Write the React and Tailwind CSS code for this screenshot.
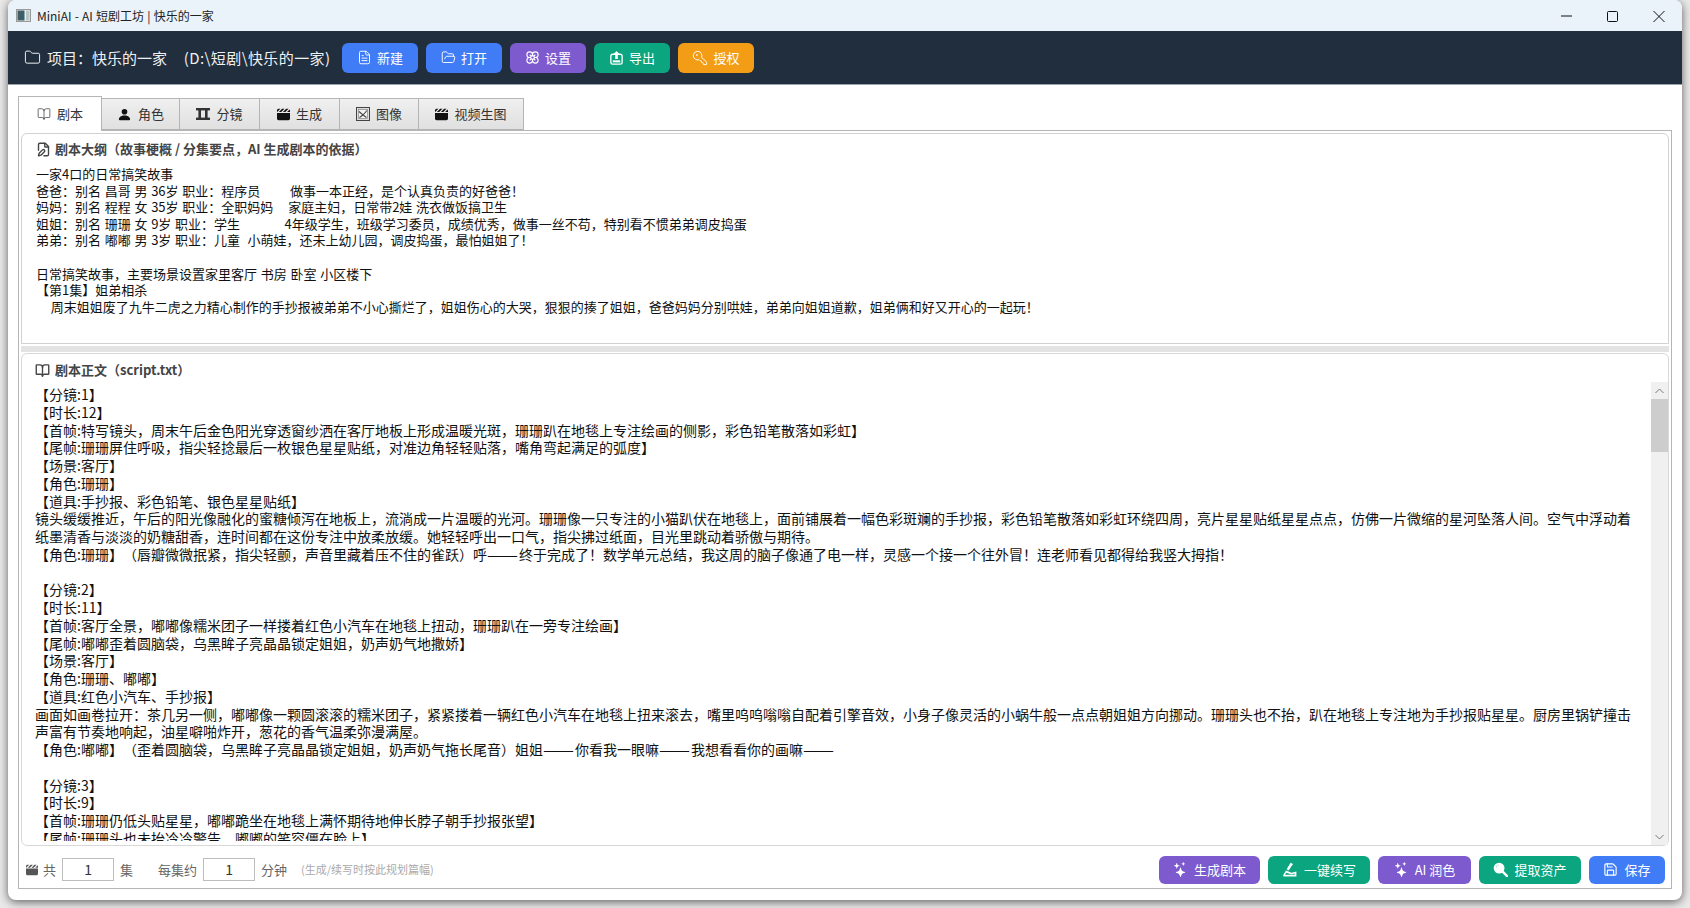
import React from 'react'
import { BookOpen, FileText, FolderOpen, Flower, KeyRound, Folder, Save, FilePen } from 'lucide-react'
import { BsStars, BsPersonFill } from 'react-icons/bs'
import { FaClapperboard } from 'react-icons/fa6'

const font = { fontFamily: '"Noto Sans CJK SC", "Liberation Sans", sans-serif' }

const outline = [
  '一家4口的日常搞笑故事',
  '爸爸：别名 昌哥 男 36岁 职业：程序员        做事一本正经，是个认真负责的好爸爸！',
  '妈妈：别名 程程 女 35岁 职业：全职妈妈    家庭主妇，日常带2娃 洗衣做饭搞卫生',
  '姐姐：别名 珊珊 女 9岁 职业：学生            4年级学生，班级学习委员，成绩优秀，做事一丝不苟，特别看不惯弟弟调皮捣蛋',
  '弟弟：别名 嘟嘟 男 3岁 职业：儿童  小萌娃，还未上幼儿园，调皮捣蛋，最怕姐姐了！',
  '',
  '日常搞笑故事，主要场景设置家里客厅 书房 卧室 小区楼下',
  '【第1集】姐弟相杀',
  '    周末姐姐废了九牛二虎之力精心制作的手抄报被弟弟不小心撕烂了，姐姐伤心的大哭，狠狠的揍了姐姐，爸爸妈妈分别哄娃，弟弟向姐姐道歉，姐弟俩和好又开心的一起玩！',
]

const script = [
  '【分镜:1】',
  '【时长:12】',
  '【首帧:特写镜头，周末午后金色阳光穿透窗纱洒在客厅地板上形成温暖光斑，珊珊趴在地毯上专注绘画的侧影，彩色铅笔散落如彩虹】',
  '【尾帧:珊珊屏住呼吸，指尖轻捻最后一枚银色星星贴纸，对准边角轻轻贴落，嘴角弯起满足的弧度】',
  '【场景:客厅】',
  '【角色:珊珊】',
  '【道具:手抄报、彩色铅笔、银色星星贴纸】',
  '镜头缓缓推近，午后的阳光像融化的蜜糖倾泻在地板上，流淌成一片温暖的光河。珊珊像一只专注的小猫趴伏在地毯上，面前铺展着一幅色彩斑斓的手抄报，彩色铅笔散落如彩虹环绕四周，亮片星星贴纸星星点点，仿佛一片微缩的星河坠落人间。空气中浮动着',
  '纸墨清香与淡淡的奶糖甜香，连时间都在这份专注中放柔放缓。她轻轻呼出一口气，指尖拂过纸面，目光里跳动着骄傲与期待。',
  '【角色:珊珊】（唇瓣微微抿紧，指尖轻颤，声音里藏着压不住的雀跃）呼——终于完成了！数学单元总结，我这周的脑子像通了电一样，灵感一个接一个往外冒！连老师看见都得给我竖大拇指！',
  '',
  '【分镜:2】',
  '【时长:11】',
  '【首帧:客厅全景，嘟嘟像糯米团子一样搂着红色小汽车在地毯上扭动，珊珊趴在一旁专注绘画】',
  '【尾帧:嘟嘟歪着圆脑袋，乌黑眸子亮晶晶锁定姐姐，奶声奶气地撒娇】',
  '【场景:客厅】',
  '【角色:珊珊、嘟嘟】',
  '【道具:红色小汽车、手抄报】',
  '画面如画卷拉开：茶几另一侧，嘟嘟像一颗圆滚滚的糯米团子，紧紧搂着一辆红色小汽车在地毯上扭来滚去，嘴里呜呜嗡嗡自配着引擎音效，小身子像灵活的小蜗牛般一点点朝姐姐方向挪动。珊珊头也不抬，趴在地毯上专注地为手抄报贴星星。厨房里锅铲撞击',
  '声富有节奏地响起，油星噼啪炸开，葱花的香气温柔弥漫满屋。',
  '【角色:嘟嘟】（歪着圆脑袋，乌黑眸子亮晶晶锁定姐姐，奶声奶气拖长尾音）姐姐——你看我一眼嘛——我想看看你的画嘛——',
  '',
  '【分镜:3】',
  '【时长:9】',
  '【首帧:珊珊仍低头贴星星，嘟嘟跪坐在地毯上满怀期待地伸长脖子朝手抄报张望】',
  '【尾帧:珊珊头也未抬冷冷警告，嘟嘟的笑容僵在脸上】',
]

function ExportIcon() {
  return (
    <svg width="15" height="15" viewBox="0 0 16 16" fill="none">
      <rect x="2" y="4.5" width="12" height="10.5" rx="2" stroke="currentColor" strokeWidth="1.4" />
      <path d="M8 1 4.8 4.6H6.6V9.5H9.4V4.6H11.2Z" fill="currentColor" />
      <rect x="4" y="11" width="8" height="2.2" fill="currentColor" />
    </svg>
  )
}

function FilmIcon() {
  return (
    <svg width="14" height="12" viewBox="0 0 14 12" fill="#333">
      <rect x="0" y="0" width="14" height="2.4" />
      <rect x="0" y="9.6" width="14" height="2.4" />
      <rect x="2.4" y="2" width="2.6" height="8" />
      <rect x="9" y="2" width="2.6" height="8" />
    </svg>
  )
}

function PictureIcon() {
  return (
    <svg width="14" height="14" viewBox="0 0 14 14" fill="none">
      <rect x="0.5" y="0.5" width="13" height="13" fill="#ddd" stroke="#444" />
      <rect x="2.5" y="2.5" width="9" height="9" fill="#f4f4f4" stroke="#777" strokeWidth="0.6" />
      <path d="M3 4.5 7 8 11 3.5M3.5 10.5 7 8l3.5 2.5" stroke="#444" strokeWidth="1.1" />
    </svg>
  )
}

function WriteIcon() {
  return (
    <svg width="16" height="16" viewBox="0 0 16 16" fill="currentColor">
      <path d="M8.6 0.8 11 2 6.6 8.4 4.6 7.2Z" />
      <path d="M4 8.4 9.6 10.8 14.4 9.6V14.6H2.6C1.2 14.6.8 13.4 1.5 12.4ZM4.4 10.8 3 12.8H12.6V11.6L9.6 12.4Z" fillRule="evenodd" />
    </svg>
  )
}

function SearchIcon() {
  return (
    <svg width="15" height="15" viewBox="0 0 16 16">
      <circle cx="6.5" cy="6.5" r="5.8" fill="currentColor" />
      <path d="M10.8 10.8 15 15" stroke="currentColor" strokeWidth="2.6" strokeLinecap="round" />
      <path d="M3.4 6.2a3 3 0 0 1 3-3" stroke="#b9e8da" strokeWidth="1.2" fill="none" />
    </svg>
  )
}

const headerBtns = [
  { label: '新建', icon: <FileText size={15} strokeWidth={1.5} />, color: 'bg-[#3f7cf6]' },
  { label: '打开', icon: <FolderOpen size={15} strokeWidth={1.5} />, color: 'bg-[#3f7cf6]' },
  { label: '设置', icon: <Flower size={15} strokeWidth={1.8} />, color: 'bg-[#7d5bcf]' },
  { label: '导出', icon: <ExportIcon />, color: 'bg-[#0ba57f]' },
  { label: '授权', icon: <KeyRound size={16} strokeWidth={1.4} className="-scale-x-100" />, color: 'bg-[#f39c16]' },
]

const tabs = [
  { label: '剧本', icon: <BookOpen size={14} strokeWidth={1.2} />, w: 'w-[84px]', active: true },
  { label: '角色', icon: <BsPersonFill size={15} color="#111" />, w: 'w-[78px]' },
  { label: '分镜', icon: <FilmIcon />, w: 'w-[80px]' },
  { label: '生成', icon: <FaClapperboard size={13} color="#111" />, w: 'w-[80px]' },
  { label: '图像', icon: <PictureIcon />, w: 'w-[79px]' },
  { label: '视频生图', icon: <FaClapperboard size={13} color="#111" />, w: 'w-[105px]' },
]

const footerBtns = [
  { label: '生成剧本', icon: <BsStars size={15} />, color: 'bg-[#7d5bcf]', w: 'w-[101px]' },
  { label: '一键续写', icon: <WriteIcon />, color: 'bg-[#0ba57f]', w: 'w-[102px]' },
  { label: 'AI 润色', icon: <BsStars size={15} />, color: 'bg-[#7d5bcf]', w: 'w-[93px]' },
  { label: '提取资产', icon: <SearchIcon />, color: 'bg-[#0ba57f]', w: 'w-[102px]' },
  { label: '保存', icon: <Save size={15} strokeWidth={1.8} />, color: 'bg-[#3f7cf6]', w: 'w-[76px]' },
]

// dash runs are wider in the reference font, so they get stretched
function withDashes(t) {
  return t.split(/(——)/).map((part, i) =>
    part === '——' ? <span key={i} className="inline-block w-[32px] origin-left scale-x-[1.32]">——</span> : part
  )
}

function Lines({ items, h }) {
  return items.map((t, i) => (
    <div key={i} className={`whitespace-pre ${h}`}>{t ? withDashes(t) : ' '}</div>
  ))
}

export default function App() {
  return (
    <div style={font} className="h-[908px] w-full overflow-hidden bg-[#e9e9e9] pl-2 [text-spacing-trim:space-all]">
      <div className="flex h-[900px] w-[1674px] flex-col overflow-hidden rounded-[8px] bg-white shadow-[0_2px_10px_rgba(0,0,0,0.6)]">
        {/* title bar */}
        <div className="flex h-[31px] shrink-0 items-center bg-[#eaf3f9] pl-2 text-[12px] text-[#222] [word-spacing:0.5px]">
          <svg width="15" height="13" viewBox="0 0 15 13" className="mr-[6px]">
            <rect x="0.5" y="0.5" width="14" height="12" fill="#e8eef0" stroke="#999" />
            <rect x="1.5" y="1.5" width="7" height="10" fill="#3d5f68" />
            <rect x="10" y="1.5" width="3.5" height="10" fill="#b8c8c8" />
          </svg>
          <span>MiniAI - AI 短剧工坊 | 快乐的一家</span>
          <div className="ml-auto flex items-center">
            <svg width="46" height="14" viewBox="0 0 46 14" stroke="#111"><path d="M17 7h11" /></svg>
            <svg width="46" height="14" viewBox="0 0 46 14" fill="none" stroke="#111"><rect x="17.5" y="2.5" width="10" height="10" rx="1" /></svg>
            <svg width="46" height="14" viewBox="0 0 46 14" stroke="#111"><path d="M17.5 2 28.5 13M28.5 2 17.5 13" /></svg>
          </div>
        </div>

        {/* header */}
        <div className="flex h-[54px] shrink-0 items-center border-b border-[#9aa3ab] bg-[#212e3d] pl-4 text-[15px] text-[#eef2f5]">
          <Folder size={17} strokeWidth={1.4} className="mr-[6px]" />
          <span className="w-[295px] pt-px whitespace-pre">项目：快乐的一家     <span className="tracking-[0.4px]">(D:\短剧\快乐的一家)</span></span>
          <div className="flex gap-2">
            {headerBtns.map((b) => (
              <button key={b.label} className={`flex h-[30px] w-[76px] items-center justify-center gap-[5px] rounded-[6px] text-[13px] text-white ${b.color}`}>
                {b.icon}{b.label}
              </button>
            ))}
          </div>
        </div>

        {/* tabs */}
        <div className="flex min-h-0 flex-1 flex-col px-[10px] pt-[11px] pb-[11px]">
          <div className="relative z-10 flex h-[34px] shrink-0 items-end">
            {tabs.map((t) => (
              <div
                key={t.label}
                className={t.active
                  ? `flex h-[35px] ${t.w} -mb-px items-center justify-center gap-[6px] border border-b-0 border-[#b5b5b5] bg-white text-[13px] text-[#333]`
                  : `flex h-[32px] ${t.w} items-center justify-center gap-[6px] border-y border-r border-[#b5b5b5] bg-gradient-to-b from-[#f0f0f0] to-[#e0e0e0] text-[13px] text-[#333]`}
              >
                {t.icon}{t.label}
              </div>
            ))}
          </div>

          <div className="flex min-h-0 flex-1 flex-col border border-[#b5b5b5] px-[2px] pt-[2px]">
            {/* outline card */}
            <div className="flex h-[211px] shrink-0 flex-col rounded-t-[6px] border border-[#d2d2d2] pl-[14px]">
              <div className="mb-[2px] flex h-[30px] shrink-0 items-center gap-[4px] text-[13px] font-bold text-[#444]">
                <FilePen size={15} strokeWidth={2.2} />
                <span className="whitespace-pre">剧本大纲（故事梗概 / 分集要点，AI 生成剧本的依据）</span>
              </div>
              <div className="text-[13px] text-[#111] [word-spacing:0.8px]">
                <Lines items={outline} h="h-[16.6px] leading-[16.6px]" />
              </div>
            </div>
            <div className="mt-[2px] mb-[1px] h-[6px] shrink-0 bg-[#e3e3e3]" />

            {/* script card */}
            <div className="flex h-[493px] shrink-0 flex-col rounded-[6px] border border-[#d8d8d8]">
              <div className="flex h-[28px] shrink-0 items-center gap-[5px] pt-[4px] pl-[13px] text-[13px] font-bold text-[#444]">
                <BookOpen size={15} strokeWidth={2.2} />
                <span className="whitespace-pre">剧本正文（script.txt）</span>
              </div>
              <div className="flex min-h-0 flex-1">
                <div className="mb-[4px] min-w-0 flex-1 overflow-hidden pt-[4px] pl-[13px] text-[14px] text-[#111]">
                  <Lines items={script} h="h-[17.75px] leading-[17.75px]" />
                </div>
                <div className="flex w-[17px] shrink-0 flex-col bg-[#f0f0f0] text-[#777]">
                  <div className="flex h-[17px] items-center justify-center">
                    <svg width="9" height="6" viewBox="0 0 9 6" fill="none" stroke="currentColor"><path d="M.5 5 4.5 1l4 4" /></svg>
                  </div>
                  <div className="h-[53px] bg-[#cdcdcd]" />
                  <div className="mt-auto flex h-[17px] items-center justify-center">
                    <svg width="9" height="6" viewBox="0 0 9 6" fill="none" stroke="currentColor"><path d="M.5 1l4 4 4-4" /></svg>
                  </div>
                </div>
              </div>
            </div>

            {/* footer */}
            <div className="flex min-h-0 flex-1 items-center pt-[5px] pl-[5px] text-[13px] text-[#666]">
              <FaClapperboard size={12} color="#555" />
              <span className="ml-[5px]">共</span>
              <div className="ml-[6px] flex h-[23px] w-[52px] items-center justify-center border border-[#bdbdbd] text-[14px] text-[#333]">1</div>
              <span className="ml-[6px]">集</span>
              <span className="ml-[25px]">每集约</span>
              <div className="ml-[6px] flex h-[23px] w-[52px] items-center justify-center border border-[#bdbdbd] text-[14px] text-[#333]">1</div>
              <span className="ml-[6px]">分钟</span>
              <span className="ml-[14px] text-[11px] text-[#aaa]">(生成/续写时按此规划篇幅)</span>
              <div className="mr-[4px] ml-auto flex gap-2">
                {footerBtns.map((b) => (
                  <button key={b.label} className={`flex h-[28px] ${b.w} items-center justify-center gap-[6px] rounded-[6px] text-[13px] text-white ${b.color}`}>
                    {b.icon}{b.label}
                  </button>
                ))}
              </div>
            </div>
          </div>
        </div>
      </div>
    </div>
  )
}
